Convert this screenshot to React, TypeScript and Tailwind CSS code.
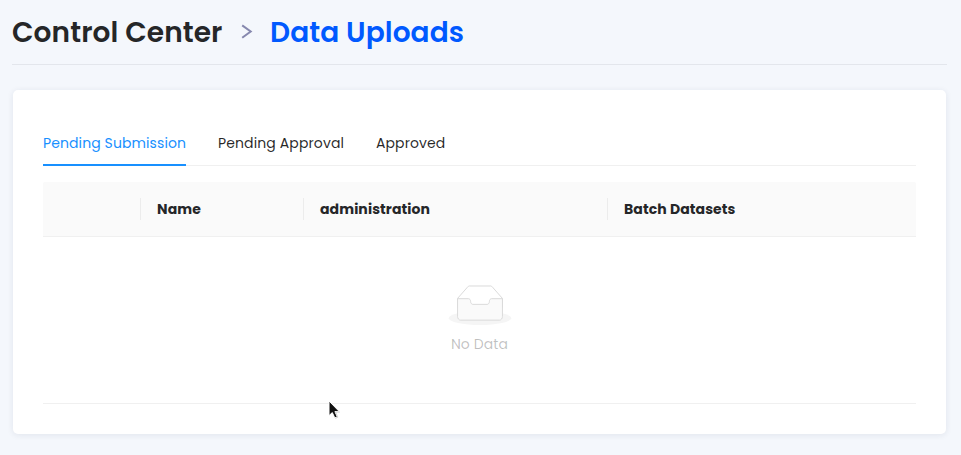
import React from "react";

const tabs = [
  { label: "Pending Submission", active: true, fit: "w-[143px] text-[#1890ff] tracking-[0.1px]" },
  { label: "Pending Approval", active: false, fit: "w-[126px] text-black/85 tracking-[0.12px]" },
  { label: "Approved", active: false, fit: "w-[70px] text-black/85 tracking-[0.1px]" },
];

const columns = [
  { label: "", cell: "w-[98px]", divider: true },
  { label: "Name", cell: "w-[163px]", divider: true },
  { label: "administration", cell: "w-[304px]", divider: true },
  { label: "Batch Datasets", cell: "flex-1", divider: false },
];

function EmptyBox() {
  return (
    <svg width="64" height="40" viewBox="0 0 64 41" preserveAspectRatio="xMidYMid meet">
      <g transform="translate(0 1)" fill="none" fillRule="evenodd">
        <ellipse fill="#f5f5f5" cx="32" cy="33" rx="32" ry="7" />
        <g fillRule="nonzero" stroke="#d9d9d9">
          <path d="M55 12.76L44.854 1.258C44.367.474 43.656 0 42.907 0H21.093c-.749 0-1.46.474-1.947 1.257L9 12.761V22h46v-9.24z" />
          <path
            d="M41.613 15.931c0-1.605.994-2.93 2.227-2.931H55v18.137C55 33.26 53.68 35 52.05 35h-40.1C10.32 35 9 33.259 9 31.137V13h11.16c1.233 0 2.227 1.323 2.227 2.928v.022c0 1.605 1.005 2.901 2.237 2.901h14.752c1.232 0 2.237-1.308 2.237-2.913v-.007z"
            fill="#fafafa"
          />
        </g>
      </g>
    </svg>
  );
}

function Pointer() {
  return (
    <svg className="absolute left-[327px] top-[399px]" width="14" height="21" viewBox="0 0 14 21">
      <path d="M2 2v14.6l3.3-3 2.5 5.3 2.5-1.1-2.4-5.2h4.4z" fill="#111" stroke="#fff" strokeWidth="1" />
      <path d="M8.3 19.4l2.6-1.2-2.3-5.1h4.2" fill="none" stroke="#bbb" strokeWidth="0.6" />
    </svg>
  );
}

export default function App() {
  return (
    <div className="relative h-[455px] w-[961px] overflow-hidden bg-[#f4f7fc] pl-3 pr-[14px] font-[Poppins,Inter,sans-serif] text-[#252628]">
      <header className="flex h-[65px] items-center border-b border-[#e3e6ec] text-[28px] font-semibold leading-[44px] tracking-[0.1px] whitespace-nowrap">
        <h1 className="w-[229px] pt-[2px]">Control Center</h1>
        <svg className="mr-[17px] shrink-0" width="12" height="16" viewBox="0 0 12 16" fill="none">
          <path d="M1.2 1.4L9.7 7.5L1.2 13.8" stroke="#8688ae" strokeWidth="2" />
        </svg>
        <span className="pt-[2px] text-[#0059ff]">Data Uploads</span>
      </header>

      <main className="ml-px mt-[25px] h-[344px] w-[933px] rounded-[5px] bg-white px-[30px] pt-[30px] shadow-[0_1px_6px_rgba(30,40,80,0.09)]">
        <nav className="flex h-[46px] gap-8 border-b border-[#f0f0f0] text-[14px] leading-[22px]">
          {tabs.map((tab) => (
            <button
              key={tab.label}
              className={`h-[46px] pt-[1px] text-left whitespace-nowrap ${tab.fit} ${tab.active ? "border-b-2 border-[#1890ff]" : "border-b-2 border-transparent"}`}
            >
              {tab.label}
            </button>
          ))}
        </nav>

        <section className="mt-4">
          <div className="flex h-[55px] items-center rounded-t-[2px] border-b border-[#f0f0f0] bg-[#fafafa] text-[14px] font-bold leading-[22px] tracking-[0.1px]">
            {columns.map((col, i) => (
              <div
                key={i}
                className={`h-[22px] ${col.cell} ${i > 0 ? "pl-4" : ""} ${col.divider ? "border-r border-[#ececec]" : ""}`}
              >
                {col.label}
              </div>
            ))}
          </div>
          <div className="flex h-[167px] flex-col items-center border-b border-[#f0f0f0] pt-12">
            <EmptyBox />
            <p className="mt-2 text-[14px] leading-[22px] tracking-[0.1px] text-black/25">No Data</p>
          </div>
        </section>
      </main>
      <Pointer />
    </div>
  );
}
